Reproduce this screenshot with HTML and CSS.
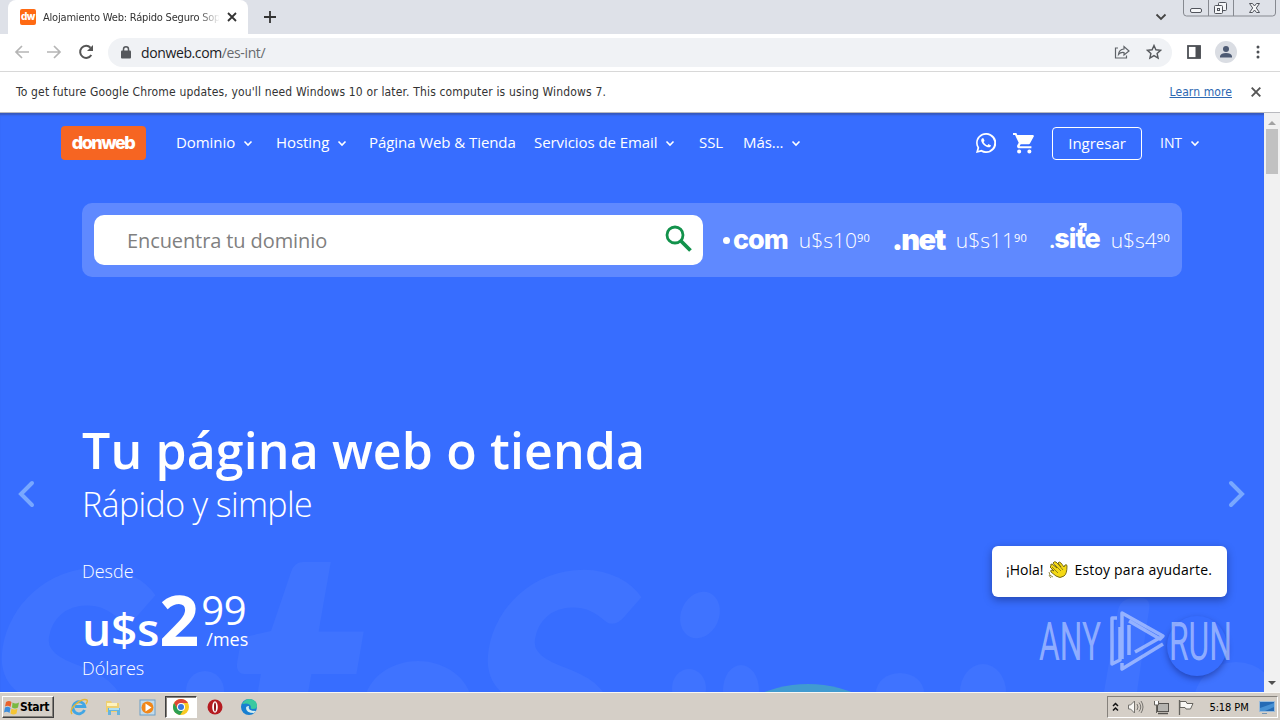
FILE: index.html
```
<!DOCTYPE html>
<html lang="es">
  <head>
    <meta charset="UTF-8">
    <meta name="viewport" content="width=device-width, initial-scale=1.0">
    <title>Alojamiento Web: Rápido Seguro Soporte</title>
    <link rel="stylesheet" href="styles.css">
  </head>
  <body>
    <div class="tabstrip">
      <div class="tab">
        <div class="favicon">dw</div>
        <span class="tabtitle">Alojamiento Web: Rápido Seguro Sop</span>
        <svg class="tabclose" width="10" height="10" viewBox="0 0 10 10"><path d="M1 1l8 8M9 1l-8 8" stroke="#333" stroke-width="1.8"/></svg>
      </div>
      <svg class="newtab" width="12" height="12" viewBox="0 0 12 12"><path d="M6 0v12M0 6h12" stroke="#333" stroke-width="1.8"/></svg>
      <svg class="tabsearch" width="12" height="8" viewBox="0 0 12 8"><path d="M1.500 1.500l4.500 4.500 4.500-4.500" fill="none" stroke="#444" stroke-width="1.800"/></svg>
      <svg class="winbuttons" width="93" height="17" viewBox="0 0 93 17">
        <path d="M.5 0v13q0 3 3 3h86q3 0 3-3V0M25.500 0v16M50.500 0v16" fill="none" stroke="#868990"/>
        <g fill="#f5f6f8" stroke="#51545c">
          <rect x="7.500" y="8.500" width="11" height="4" rx="1.500"/>
          <rect x="35.500" y="2.500" width="8" height="8" rx="1"/>
          <rect x="31.500" y="5.500" width="8" height="8" rx="1"/>
          <rect x="34.500" y="8.500" width="2" height="2"/>
          <path d="M66.500 3.500h3l2 2.500 2-2.500h3l-3.200 4.500 3.200 4.500h-3l-2-2.500-2 2.500h-3l3.200-4.500z"/>
        </g>
      </svg>
    </div>
    <div class="toolbar">
      <svg width="16" height="14" viewBox="0 0 16 14"><path d="M15 7H2M8 1L2 7l6 6" fill="none" stroke="#b5b5b5" stroke-width="1.700"/></svg>
      <svg width="16" height="14" viewBox="0 0 16 14"><path d="M1 7h13M8 1l6 6-6 6" fill="none" stroke="#b5b5b5" stroke-width="1.700"/></svg>
      <svg width="16" height="16" viewBox="0 0 16 16"><path d="M13.300 11a6 6 0 1 1-.800-7.300" fill="none" stroke="#555" stroke-width="2"/><path d="M15 1v6H9z" fill="#555"/></svg>
      <div class="omnibox">
        <svg width="10" height="13" viewBox="0 0 10 13"><rect y="4.500" width="10" height="8" rx="1" fill="#55585c"/><path d="M2.500 5V3.300a2.500 2.500 0 0 1 5 0V5" fill="none" stroke="#55585c" stroke-width="1.500"/></svg>
        <span class="url">donweb.com<span>/es-int/</span></span>
        <svg class="share" width="16" height="14" viewBox="0 0 16 14" fill="none" stroke="#5f6368" stroke-width="1.200"><path d="M4 3H1.500v10h11v-2.500"/><path d="M4.500 9.500Q5 4.500 10 4V1.500L15 6l-5 4V7.500Q6.500 7 4.500 9.500z"/></svg>
        <svg width="16" height="16" viewBox="0 0 16 16"><path d="M8 1.500l1.900 4.300 4.700.5-3.500 3.100 1 4.600L8 11.600 3.900 14l1-4.600L1.400 6.300l4.700-.5z" fill="none" stroke="#55585c" stroke-width="1.400"/></svg>
      </div>
      <svg class="sidepanel" width="14" height="14" viewBox="0 0 14 14"><rect x="1" y="1" width="12" height="12" fill="none" stroke="#4c4f54" stroke-width="1.800"/><path d="M8.500 1h5v12h-5z" fill="#4c4f54"/></svg>
      <div class="avatar"><svg width="14" height="14" viewBox="0 0 14 14" fill="#4d5a73"><circle cx="7" cy="4" r="3"/><path d="M1 12.500V11q1-3 6-3t6 3v1.500z"/></svg></div>
      <svg class="kebab" width="4" height="14" viewBox="0 0 4 14" fill="#4c4f54"><circle cx="2" cy="2" r="1.500"/><circle cx="2" cy="7" r="1.500"/><circle cx="2" cy="12" r="1.500"/></svg>
    </div>
    <div class="infobar">
      <span class="infotext">To get future Google Chrome updates, you'll need Windows 10 or later. This computer is using Windows 7.</span>
      <a class="learnmore">Learn more</a>
      <svg width="10" height="10" viewBox="0 0 10 10"><path d="M.7.7l8.600 8.600M9.300.7L.7 9.300" stroke="#555" stroke-width="1.900"/></svg>
    </div>
    <div class="viewport">
      <div class="page">
        <svg class="backdrop" width="1264" height="140" viewBox="0 552 1264 140">
          <text class="script" transform="translate(-46 806) skewX(-9)">S</text>
          <text class="script" transform="translate(440 808) skewX(-9)">S</text>
          <text class="script" transform="translate(212 858) skewX(-4) scale(1.15 1.36)">t</text>
          <ellipse cx="205" cy="691" rx="19" ry="20"/>
          <ellipse cx="418" cy="706" rx="54" ry="45"/>
          <ellipse cx="700" cy="615" rx="19" ry="24" transform="rotate(24 700 615)"/>
          <ellipse cx="689" cy="688" rx="17" ry="19"/>
          <ellipse cx="741" cy="690" rx="18" ry="25"/>
          <ellipse cx="900" cy="693" rx="24" ry="20"/>
          <ellipse cx="983" cy="692" rx="23" ry="28"/>
          <path d="M1104 692l14-82q3-12 16-12h7q10 0 8 12l-12 82z"/>
          <ellipse cx="1236" cy="702" rx="42" ry="40"/>
          <ellipse class="green" cx="808" cy="735" rx="81" ry="51"/>
        </svg>
        <div class="header">
          <div class="logo">donweb</div>
          <div class="nav">
            <div class="navitem">Dominio <svg class="caret" width="10" height="7" viewBox="0 0 10 7"><path d="M1.500 1.500L5 5l3.500-3.500"/></svg></div>
            <div class="navitem">Hosting <svg class="caret" width="10" height="7" viewBox="0 0 10 7"><path d="M1.500 1.500L5 5l3.500-3.500"/></svg></div>
            <div class="navitem">Página Web &amp; Tienda</div>
            <div class="navitem">Servicios de Email <svg class="caret" width="10" height="7" viewBox="0 0 10 7"><path d="M1.500 1.500L5 5l3.500-3.500"/></svg></div>
            <div class="navitem">SSL</div>
            <div class="navitem">Más... <svg class="caret" width="10" height="7" viewBox="0 0 10 7"><path d="M1.500 1.500L5 5l3.500-3.500"/></svg></div>
          </div>
          <div class="account">
            <svg width="20" height="20" viewBox="0 0 24 24" fill="#fff"><path d="M17.500 14.400c-.300-.150-1.800-.900-2-1-.300-.100-.500-.150-.700.150-.200.300-.800 1-.900 1.100-.200.200-.350.200-.650.050-1.700-.850-2.900-1.600-4-3.600-.300-.500.300-.500.850-1.600.100-.200.050-.400 0-.500l-.900-2.200c-.250-.6-.5-.5-.7-.5h-.6c-.2 0-.5.100-.8.400-1 1-1 2.400-.6 3.500 1 2.600 3.600 5.500 6.700 6.500 1.900.8 3.300.5 4.300-.6.5-.6.500-1.300.4-1.500-.1-.1-.3-.2-.6-.3z"/><path d="M12 0C5.400 0 .100 5.300.100 11.900c0 2.100.550 4.100 1.600 5.900L0 24l6.300-1.650A12 12 0 1 0 12 0zm0 21.800c-1.800 0-3.500-.5-5-1.400l-.4-.2-3.700 1 1-3.600-.3-.4A9.900 9.900 0 1 1 12 21.800z"/></svg>
            <svg class="cart" width="22" height="22" viewBox="1 1 21.500 21.500" fill="#fff"><path d="M7 18a2 2 0 1 0 0 4 2 2 0 0 0 0-4zM1 2v2h2l3.600 7.600L5.200 14c-.7 1.300.2 3 1.800 3h12v-2H7.400l1.100-2h7.500c.7 0 1.400-.4 1.700-1L21.300 5.500A1 1 0 0 0 20.400 4H5.200l-.9-2zM17 18a2 2 0 1 0 0 4 2 2 0 0 0 0-4z"/></svg>
            <div class="login">Ingresar</div>
            <div class="navitem country">INT <svg class="caret" width="10" height="7" viewBox="0 0 10 7"><path d="M1.500 1.500L5 5l3.500-3.500"/></svg></div>
          </div>
        </div>
        <div class="search">
          <div class="searchbox">
            <span>Encuentra tu dominio</span>
            <svg width="27" height="27" viewBox="0 0 27 27" fill="none" stroke="#12924b"><circle cx="10" cy="10" r="8" stroke-width="2.800"/><path d="M16 16l9.500 9.500" stroke-width="3.800"/></svg>
          </div>
          <div class="tlds">
            <div class="tld com"><b><i></i>com</b><span>u$s10<sup>90</sup></span></div>
            <div class="tld net"><b>.net</b><span>u$s11<sup>90</sup></span></div>
            <div class="tld site"><b><small>.</small>site<svg width="9" height="9" viewBox="0 0 9 9"><path d="M1 1.200h6.500V8M7 1.500L2.500 6" fill="none" stroke="#fff" stroke-width="2.400"/></svg></b><span>u$s4<sup>90</sup></span></div>
          </div>
        </div>
        <div class="hero">
          <div class="title">Tu página web o tienda</div>
          <div class="subtitle">Rápido y simple</div>
          <div class="from">Desde</div>
          <div class="price">
            <span class="currency">u$s</span>
            <span class="amount">2</span>
            <div class="cents">
              <div class="centsvalue">99</div>
              <div class="month">/mes</div>
            </div>
          </div>
          <div class="dollars">Dólares</div>
        </div>
        <svg class="arrow prev" width="17" height="28" viewBox="0 0 17 28"><path d="M14 3L3 14l11 11"/></svg>
        <svg class="arrow next" width="17" height="28" viewBox="0 0 17 28"><path d="M3 3l11 11L3 25"/></svg>
        <div class="chatbutton"></div>
        <div class="chat">
          <span>¡Hola!</span>
          <svg width="20" height="18" viewBox="0 0 20 18"><path d="M3 5q-1-2 1-2l5 4-4-5q1-2 3-1l5 5-3-4q1-2 3 0l3 4 1-2q2-1 2 1 0 8-3 10-4 3-8 0L3 11q-1-2 1-2l2 1-4-4z" fill="#f5d915" stroke="#6c6010" stroke-width=".9"/><path d="M4 6l6 6M7 4l6 6M10 3l5 6M1 11q0 4 4 5M1 14q1 2 2 3" fill="none" stroke="#7b6e19" stroke-width=".8"/></svg>
          <span class="help">Estoy para ayudarte.</span>
        </div>
        <svg class="watermark" width="194" height="64" viewBox="0 0 194 64">
          <text x="1" y="51" textLength="62" lengthAdjust="spacingAndGlyphs">ANY</text>
          <text x="131" y="51" textLength="63" lengthAdjust="spacingAndGlyphs">RUN</text>
          <path d="M79 9h-5v46l8-4V18M84 50V4l41 23-3 3-31-18M91 46V16M97 43l28-16M125 35l-41 25v-6"/>
        </svg>
      </div>
      <div class="scrollbar">
        <svg width="8" height="5" viewBox="0 0 8 5"><path d="M0 5l4-4 4 4z" fill="#a2a2a2"/></svg>
        <div class="thumb"></div>
        <svg class="down" width="8" height="5" viewBox="0 0 8 5"><path d="M0 0l4 4 4-4z" fill="#505050"/></svg>
      </div>
    </div>
    <div class="taskbar">
      <div class="start">
        <svg width="16" height="15" viewBox="0 0 16 15"><path d="M2 2q3-2 5.500 0L6.500 7Q4 5 1 6.500z" fill="#e9622b"/><path d="M8.500 2.500q3 2 6.500 0L14 7.500q-3 2-6 0z" fill="#79b940"/><path d="M1 7.500q3-1.500 5.500.5l-1 5Q3 11 0 12.500z" fill="#3c8ddc"/><path d="M7.500 8.500q3 2 6 0l-1 5q-3 2-6 0z" fill="#f6c534"/></svg>
        <span>Start</span>
      </div>
      <div class="apps">
        <div class="app"><svg width="18" height="18" viewBox="0 0 18 18" fill="none"><path d="M14.500 12a6 6 0 1 1 .3-3.500H5" stroke="#41a6e4" stroke-width="2.800"/><path d="M2 16Q-1 12 6 6t11-4q1 1-1 4" stroke="#e5b637" stroke-width="1.400"/></svg></div>
        <div class="app"><svg width="18" height="17" viewBox="0 0 18 17"><path d="M2 2h5l1 2h7v9H2z" fill="#eed071"/><path d="M3 4h10v3H3z" fill="#fff3bd"/><path d="M4 16V9h12v7h-3v-4H7v4z" fill="#67b4dd"/><path d="M5 9h10v2H5z" fill="#b4e1ef"/></svg></div>
        <div class="app"><svg width="17" height="17" viewBox="0 0 17 17"><rect x="1" y="1" width="15" height="15" fill="#c3dbea" stroke="#6c9fc7"/><circle cx="8.500" cy="8.500" r="6" fill="#f18719"/><path d="M6.500 4.500v8l6-4z" fill="#fff"/></svg></div>
        <div class="app active"><svg width="16" height="16" viewBox="0 0 16 16"><circle cx="8" cy="8" r="8" fill="#f9ca24"/><path d="M1.100 4A8 8 0 0 1 15 4H8L4.500 10z" fill="#df4637"/><path d="M1.100 4a8 8 0 0 0 6 12l3.900-6H4.500z" fill="#2c9f53"/><circle cx="8" cy="8" r="4" fill="#fff"/><circle cx="8" cy="8" r="3" fill="#3878e0"/></svg></div>
        <div class="app"><svg width="16" height="16" viewBox="0 0 16 16"><circle cx="8" cy="8" r="7.500" fill="#b51b20"/><ellipse cx="8" cy="8" rx="2.800" ry="5.800" fill="#fff"/><ellipse cx="8" cy="8" rx="1" ry="4.500" fill="#8d1014"/></svg></div>
        <div class="app"><svg width="16" height="16" viewBox="0 0 16 16"><circle cx="8" cy="8" r="8" fill="#177fd1"/><path d="M1 5Q4 0 9 0q7 1 7 7 0 3-4 3-3 0-2-2Q9 3 1 5z" fill="#39c9a0"/><path d="M8 7q-2 5 7 5l-2 2Q5 14 5 9q0-2 3-2z" fill="#d6edf0"/></svg></div>
      </div>
      <div class="tray">
        <svg width="7" height="10" viewBox="0 0 7 10" fill="none" stroke="#111" stroke-width="1.500"><path d="M1 4l2.500-2.500L6 4M1 8.500L3.500 6 6 8.500"/></svg>
        <svg width="17" height="14" viewBox="0 0 17 14" fill="none" stroke="#76746f"><path d="M1.500 5h2l4-4v12l-4-4h-2z" fill="#f8f7f4"/><path d="M10 4q2 3 0 6M12 2.500q3.500 4.500 0 9M14 1q4 6 0 12"/></svg>
        <svg width="17" height="15" viewBox="0 0 17 15"><rect x="4.500" y="3.500" width="11" height="8" fill="#b5b4b0" stroke="#55534f"/><path d="M5 13.500h10" stroke="#55534f" stroke-width="1.500"/><path d="M1.500 1v4h4V1M3.500 5v8" fill="#fff" stroke="#66645f"/></svg>
        <svg width="16" height="15" viewBox="0 0 16 15"><path d="M1.500 0v15" stroke="#66645f" stroke-width="1.300"/><path d="M2 1.500h6l1 2h6L12.500 9H8L7 7.500H2z" fill="#f8f7f4" stroke="#66645f"/></svg>
        <span class="clock">5:18 PM</span>
        <svg width="16" height="13" viewBox="0 0 16 13"><rect x=".5" y=".5" width="15" height="10" fill="#256bb5" stroke="#9cbcda"/><path d="M1 7l14-5v4L6 10H1z" fill="#4791d4"/><path d="M3 12.500h5" stroke="#7394b2"/></svg>
      </div>
    </div>
  </body>
</html>
```
FILE: styles.css
```
body {
  margin: 0;
  width: 1280px;
  height: 720px;
  overflow: hidden;
  display: flex;
  flex-direction: column;
  font-family: "Open Sans", sans-serif;
  white-space: nowrap;
}
svg {
  display: block;
  flex: none;
}
.tabstrip {
  height: 34px;
  background-color: #dee1e8;
  display: flex;
  align-items: flex-start;
  font-family: "DejaVu Sans Condensed", "DejaVu Sans", sans-serif;
}
.tab {
  box-sizing: border-box;
  margin-left: 8px;
  width: 240px;
  height: 34px;
  padding: 0 11px 0 12px;
  display: flex;
  align-items: center;
  border-radius: 8px 8px 0 0;
  background-color: white;
}
.favicon {
  width: 16px;
  height: 16px;
  margin-right: 7px;
  border-radius: 2px;
  background-color: #ff6a13;
  color: white;
  font: 800 10px/15px "Inter", sans-serif;
  letter-spacing: -0.5px;
  text-align: center;
}
.tabtitle {
  flex: 1;
  overflow: hidden;
  font-size: 11px;
  letter-spacing: -0.2px;
  color: #333;
  -webkit-mask-image: linear-gradient(to right, black 155px, transparent 177px);
  mask-image: linear-gradient(to right, black 155px, transparent 177px);
}
.tabclose {
  margin-left: 8px;
}
.newtab {
  margin: 11px 0 0 16px;
}
.tabsearch {
  margin: 13px 16px 0 auto;
}
.winbuttons {
  margin-right: 4px;
}
.toolbar {
  box-sizing: border-box;
  height: 38px;
  padding: 0 20px 1px 14px;
  display: flex;
  align-items: center;
  gap: 16px;
  background-color: white;
  border-bottom: 1px solid #d8d8d8;
}
.omnibox {
  box-sizing: border-box;
  margin-left: -2px;
  width: 1064px;
  height: 29px;
  padding: 0 10px 0 13px;
  display: flex;
  align-items: center;
  border-radius: 15px;
  background-color: #f0f2f5;
}
.url {
  margin-left: 10px;
  font-size: 14px;
  letter-spacing: -0.38px;
  color: #202124;
}
.url span {
  color: #676a6e;
}
.share {
  margin: 0 16px 0 auto;
}
.sidepanel {
  margin-left: -1px;
}
.avatar {
  margin: 0 0 0 -2px;
  width: 22px;
  height: 22px;
  display: flex;
  align-items: center;
  justify-content: center;
  border-radius: 50%;
  background-color: #dadde3;
}
.kebab {
  margin-left: 3px;
}
.infobar {
  box-sizing: border-box;
  height: 41px;
  padding: 0 19px 1px 16px;
  display: flex;
  align-items: center;
  background-color: white;
  border-bottom: 1px solid #b9babf;
  font-family: "DejaVu Sans Condensed", "DejaVu Sans", sans-serif;
  font-size: 12px;
  color: #333;
}
.infotext {
  letter-spacing: 0.16px;
}
.learnmore {
  margin: 0 19px 0 auto;
  letter-spacing: 0.1px;
  color: #2d68b2;
  text-decoration: underline;
}
.viewport {
  flex: 1;
  min-height: 0;
  display: flex;
}
.page {
  position: relative;
  width: 1264px;
  overflow: hidden;
  background-color: #376dff;
  box-shadow: inset 0 3px 2px -1px #3659bd;
  color: white;
}
.backdrop {
  position: absolute;
  left: 0;
  bottom: 0;
  fill: #3f73ff;
}
.script {
  font: italic 900 325px "Lato", sans-serif;
}
.green {
  fill: #419bd0;
}
.header {
  position: relative;
  box-sizing: border-box;
  height: 90px;
  padding: 13px 64px 0 61px;
  display: flex;
  align-items: flex-start;
}
.logo {
  width: 85px;
  height: 34px;
  border-radius: 4px;
  background-color: #f66522;
  font: 800 18px/34px "Inter", sans-serif;
  letter-spacing: -1.5px;
  text-indent: -1px;
  text-align: center;
}
.nav {
  margin-left: 30px;
  height: 32px;
  display: grid;
  grid-template-columns: 100px 93px 165px 165px 44px 60px;
  align-items: center;
}
.navitem {
  display: flex;
  align-items: center;
  gap: 8px;
  font-size: 15px;
  letter-spacing: -0.07px;
}
.caret {
  margin-top: 2px;
  fill: none;
  stroke: white;
  stroke-width: 1.6px;
}
.account {
  margin-left: auto;
  height: 34px;
  display: flex;
  align-items: center;
}
.cart {
  margin: 0 17px 0 17px;
}
.login {
  width: 88px;
  height: 31px;
  margin-right: 18px;
  border: 1px solid white;
  border-radius: 4px;
  font-size: 15px;
  line-height: 31px;
  text-align: center;
}
.country {
  margin-top: -2px;
  font-size: 14px;
}
.search {
  position: relative;
  box-sizing: border-box;
  margin-left: 82px;
  width: 1100px;
  height: 74px;
  padding: 12px;
  display: flex;
  gap: 20px;
  border-radius: 10px;
  background-color: #5f89ff;
}
.searchbox {
  box-sizing: border-box;
  width: 609px;
  height: 50px;
  padding: 0 11px 4px 33px;
  display: flex;
  align-items: center;
  justify-content: space-between;
  border-radius: 10px;
  background-color: white;
  color: #808080;
  font-size: 20px;
  letter-spacing: -0.1px;
}
.searchbox span {
  padding-top: 4px;
}
.tlds {
  flex: 1;
  display: flex;
  align-items: center;
  justify-content: space-between;
}
.tld {
  display: flex;
  align-items: center;
  gap: 11px;
  font-size: 21px;
  font-weight: 300;
}
.tld b {
  position: relative;
  font: 800 27px/28px "Inter", sans-serif;
  letter-spacing: -1px;
}
.net b {
  font-weight: 900;
  font-size: 29px;
  letter-spacing: -1.5px;
}
.tld i {
  display: inline-block;
  width: 7px;
  height: 7px;
  margin: 0 3px 5px 0;
  border-radius: 50%;
  background-color: white;
}
.tld sup {
  font-size: 11px;
  font-weight: 400;
  letter-spacing: 0.3px;
  line-height: 0;
  vertical-align: 6px;
}
.site small {
  font-size: 18px;
}
.site svg {
  position: absolute;
  left: 29px;
  top: -2px;
}
.hero {
  position: relative;
  margin: 143px 0 0 82px;
}
.title {
  font-size: 50px;
  font-weight: 600;
  letter-spacing: 0.14px;
  line-height: 60px;
}
.subtitle {
  font-size: 34px;
  font-weight: 300;
  letter-spacing: -0.65px;
  line-height: 48px;
}
.from,
.dollars {
  font-size: 18px;
  font-weight: 300;
  line-height: 24px;
}
.from {
  margin-top: 31px;
}
.price {
  height: 70px;
  display: flex;
  align-items: baseline;
}
.currency {
  font-size: 46px;
  font-weight: 600;
  letter-spacing: -0.2px;
  line-height: 72px;
}
.amount {
  width: 42px;
  font-size: 70px;
  font-weight: 700;
  line-height: 72px;
}
.cents {
  align-self: flex-start;
  padding-top: 7px;
}
.centsvalue {
  font-size: 40px;
  font-weight: 500;
  letter-spacing: -0.5px;
  line-height: 40px;
}
.month {
  margin: -3px 0 0 5px;
  font-size: 18px;
  line-height: 24px;
}
.dollars {
  margin-top: 3px;
}
.arrow {
  position: absolute;
  top: 367px;
  fill: none;
  stroke: #79a8ff;
  stroke-width: 4px;
  stroke-linecap: round;
}
.prev {
  left: 18px;
}
.next {
  right: 19px;
}
.chat {
  position: absolute;
  right: 37px;
  bottom: 95px;
  box-sizing: border-box;
  width: 235px;
  height: 51px;
  padding: 0 14px 4px;
  display: flex;
  align-items: center;
  border-radius: 6px;
  background-color: white;
  box-shadow: 0 3px 8px rgba(0, 0, 30, 0.35);
  color: black;
  font-size: 14px;
}
.chat svg {
  margin: 0 6px 0 5px;
}
.help {
  letter-spacing: 0.18px;
}
.chatbutton {
  position: absolute;
  right: 37px;
  bottom: 16px;
  width: 60px;
  height: 60px;
  border-radius: 50%;
  background-color: #376dff;
  box-shadow: 0 3px 6px rgba(0, 0, 60, 0.35);
}
.watermark {
  position: absolute;
  right: 32px;
  bottom: 19px;
  fill: rgba(255, 255, 255, 0.45);
  font: 53px "Roboto", sans-serif;
}
.watermark path {
  fill: none;
  stroke: rgba(255, 255, 255, 0.45);
  stroke-width: 3.5px;
  stroke-linejoin: round;
}
.scrollbar {
  box-sizing: border-box;
  width: 16px;
  padding: 7px 2px 6px;
  display: flex;
  flex-direction: column;
  align-items: center;
  background-color: #f1f1f1;
}
.thumb {
  margin-top: 4px;
  width: 12px;
  height: 45px;
  background-color: #c1c1c1;
}
.down {
  margin-top: auto;
}
.taskbar {
  box-sizing: border-box;
  height: 28px;
  padding: 3px 2px 2px 2px;
  border-top: 1px solid #f8f7f4;
  display: flex;
  align-items: center;
  background-color: #d5cfc7;
  font-family: "DejaVu Sans Condensed", "DejaVu Sans", sans-serif;
  color: black;
}
.start {
  box-sizing: border-box;
  width: 52px;
  height: 22px;
  padding-left: 1px;
  display: flex;
  align-items: center;
  border: 1px solid;
  border-color: white #404040 #404040 white;
  box-shadow: inset -1px -1px #85817b;
  font-size: 12px;
  font-weight: bold;
  letter-spacing: -0.3px;
}
.apps {
  margin-left: 9px;
  display: flex;
  gap: 2px;
}
.app {
  box-sizing: border-box;
  width: 32px;
  height: 22px;
  display: flex;
  align-items: center;
  justify-content: center;
}
.active {
  border: 1px solid;
  border-color: #404040 white white #404040;
  box-shadow: inset 1px 1px #85817b;
  background-color: white;
}
.tray {
  box-sizing: border-box;
  width: 171px;
  height: 22px;
  margin-left: auto;
  padding: 0 2px 0 4px;
  display: flex;
  align-items: center;
  justify-content: space-between;
  border: 1px solid;
  border-color: #85817b white white #85817b;
}
.clock {
  margin: 0 2px 0 7px;
  font-size: 11px;
  letter-spacing: -0.1px;
}
```
